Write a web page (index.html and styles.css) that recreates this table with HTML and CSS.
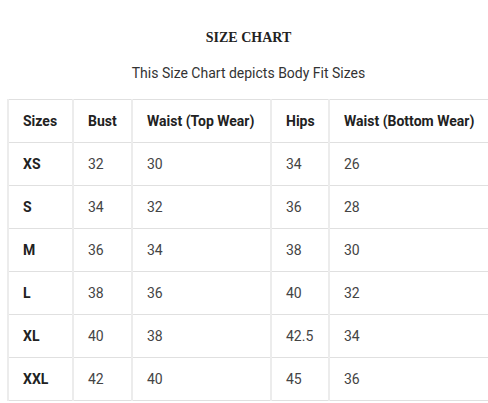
FILE: index.html
```html
<!DOCTYPE html>
<html>
<head>
<meta charset="utf-8">
<link rel="stylesheet" href="styles.css">
</head>
<body>
<div class="page">
  <h2 class="title">SIZE CHART</h2>
  <p class="subtitle">This Size Chart depicts Body Fit Sizes</p>
  <table class="chart">
    <colgroup>
      <col class="c1"><col class="c2"><col class="c3"><col class="c4"><col class="c5">
    </colgroup>
    <thead>
      <tr><th>Sizes</th><th>Bust</th><th>Waist (Top Wear)</th><th>Hips</th><th>Waist (Bottom Wear)</th></tr>
    </thead>
    <tbody>
      <tr><th>XS</th><td>32</td><td>30</td><td>34</td><td>26</td></tr>
      <tr><th>S</th><td>34</td><td>32</td><td>36</td><td>28</td></tr>
      <tr><th>M</th><td>36</td><td>34</td><td>38</td><td>30</td></tr>
      <tr><th>L</th><td>38</td><td>36</td><td>40</td><td>32</td></tr>
      <tr><th>XL</th><td>40</td><td>38</td><td>42.5</td><td>34</td></tr>
      <tr><th>XXL</th><td>42</td><td>40</td><td>45</td><td>36</td></tr>
    </tbody>
  </table>
</div>
</body>
</html>
```

FILE: styles.css
```css
html, body {
  margin: 0;
  padding: 0;
  background: #ffffff;
  overflow: hidden;
}
.page {
  width: 483px;
  margin-left: 7px;
  font-family: Roboto, "Liberation Sans", sans-serif;
}
.title {
  margin: 0;
  padding-top: 28px;
  font-family: "Liberation Serif", "Times New Roman", serif;
  font-size: 14px;
  line-height: 20px;
  font-weight: bold;
  text-align: center;
  color: #222222;
}
.subtitle {
  margin: 15px 0 0;
  font-size: 14px;
  line-height: 20px;
  text-align: center;
  color: #333333;
}
.chart {
  margin-top: 16px;
  width: 495px;
  table-layout: fixed;
  border-collapse: collapse;
  font-size: 14px;
}
.c1 { width: 65px; }
.c2 { width: 59px; }
.c3 { width: 139px; }
.c4 { width: 58px; }
.c5 { width: 174px; }
.chart th, .chart td {
  height: 42px;
  padding: 0 0 0 14px;
  text-align: left;
  vertical-align: middle;
  border-top: 1px solid #e0e0e0;
  border-bottom: 1px solid #e0e0e0;
  border-left: 2px solid #ececec;
  border-right: 2px solid #ececec;
  line-height: 20px;
  white-space: nowrap;
}
.chart th {
  font-weight: bold;
  color: #222222;
}
.chart td {
  font-weight: normal;
  color: #444444;
}
```
